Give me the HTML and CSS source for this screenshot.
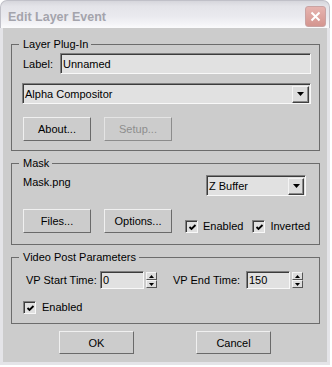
FILE: index.html
```html
<!DOCTYPE html>
<html lang="en">
<head>
  <meta charset="UTF-8" />
  <title>Edit Layer Event</title>
  <link rel="stylesheet" href="styles.css">
</head>
<body>

  <div class="window">
    <div class="titlebar">
      <span class="title">Edit Layer Event</span>
      <button class="close">
        <svg width="11" height="11" viewBox="0 0 11 11"><path d="M1.5 1.5 L9.5 9.5 M9.5 1.5 L1.5 9.5" stroke="#fff" stroke-width="2" fill="none"/></svg>
      </button>
    </div>

    <div class="client">

      <!-- Layer Plug-In -->
      <fieldset class="group plugin">
        <legend>Layer Plug-In</legend>
        <div class="row">
          <span class="label-name">Label:</span>
          <div class="field name-field">Unnamed</div>
        </div>
        <div class="combo plugin-combo">
          <span class="combo-text">Alpha Compositor</span>
          <span class="drop">
            <svg width="7" height="4" viewBox="0 0 7 4"><path d="M0 0 H7 L3.5 4 Z" fill="#000"/></svg>
          </span>
        </div>
        <div class="row btn-row">
          <button class="btn">About...</button>
          <button class="btn" disabled>Setup...</button>
        </div>
      </fieldset>

      <!-- Mask -->
      <fieldset class="group mask">
        <legend>Mask</legend>
        <div class="row mask-row">
          <span class="mask-file">Mask.png</span>
          <div class="combo zbuffer">
            <span class="combo-text">Z Buffer</span>
            <span class="drop">
              <svg width="7" height="4" viewBox="0 0 7 4"><path d="M0 0 H7 L3.5 4 Z" fill="#000"/></svg>
            </span>
          </div>
        </div>
        <div class="row btn-row bottom">
          <button class="btn">Files...</button>
          <button class="btn">Options...</button>
          <label class="check-item first">
            <span class="check"><svg width="9" height="9" viewBox="0 0 9 9"><path d="M1.5 4 L3.5 6 L7.5 2" stroke="#000" stroke-width="1.8" fill="none"/></svg></span>
            Enabled
          </label>
          <label class="check-item">
            <span class="check"><svg width="9" height="9" viewBox="0 0 9 9"><path d="M1.5 4 L3.5 6 L7.5 2" stroke="#000" stroke-width="1.8" fill="none"/></svg></span>
            Inverted
          </label>
        </div>
      </fieldset>

      <!-- Video Post Parameters -->
      <fieldset class="group vp">
        <legend>Video Post Parameters</legend>
        <div class="row time-row">
          <span class="time-label start">VP Start Time:</span>
          <div class="field time-field">0</div>
          <div class="spin">
            <span class="spin-btn"><svg width="5" height="3" viewBox="0 0 5 3"><path d="M0 3 H5 L2.5 0 Z" fill="#000"/></svg></span>
            <span class="spin-btn"><svg width="5" height="3" viewBox="0 0 5 3"><path d="M0 0 H5 L2.5 3 Z" fill="#000"/></svg></span>
          </div>
          <span class="time-label end">VP End Time:</span>
          <div class="field time-field">150</div>
          <div class="spin">
            <span class="spin-btn"><svg width="5" height="3" viewBox="0 0 5 3"><path d="M0 3 H5 L2.5 0 Z" fill="#000"/></svg></span>
            <span class="spin-btn"><svg width="5" height="3" viewBox="0 0 5 3"><path d="M0 0 H5 L2.5 3 Z" fill="#000"/></svg></span>
          </div>
        </div>
        <label class="check-item vp-enabled">
          <span class="check"><svg width="9" height="9" viewBox="0 0 9 9"><path d="M1.5 4 L3.5 6 L7.5 2" stroke="#000" stroke-width="1.8" fill="none"/></svg></span>
          Enabled
        </label>
      </fieldset>

      <div class="dialog-buttons">
        <button class="btn wide">OK</button>
        <button class="btn wide">Cancel</button>
      </div>

    </div>
  </div>

</body>
</html>
```

FILE: styles.css
```css
body {
  margin: 0;
  background: #fff;
  font-family: 'Liberation Sans', Arial, sans-serif;
  font-size: 11px;
  color: #000;
}

.window {
  width: 330px;
  height: 365px;
  display: flex;
  flex-direction: column;
}

.titlebar {
  height: 28px;
  box-sizing: border-box;
  display: flex;
  justify-content: space-between;
  align-items: center;
  padding: 0 3px 0 7px;
  background: linear-gradient(#d6d6dc 0%, #e4e4e9 20%, #e9e9ee 55%, #f4f4f7 85%, #fbfbfc 100%);
  border: 1px solid #c0c0c8;
  border-bottom: none;
  border-radius: 7px 7px 0 0;
}

.title {
  font-weight: bold;
  font-size: 12.5px;
  color: #a4a4ac;
  padding-top: 4px;
}

.close {
  width: 21px;
  height: 21px;
  margin-top: 3px;
  padding: 0;
  display: flex;
  align-items: center;
  justify-content: center;
  background: linear-gradient(#e6b4b0, #d4958f);
  border: 1px solid #c9a3a3;
  border-radius: 3px;
}

.client {
  flex: 1;
  display: flex;
  flex-direction: column;
  background: #cccccc;
  border: 3px solid #e4e4e8;
  border-top: none;
}

/* group boxes */

.group {
  margin: 0 7px 0 8px;
  border: 1px solid #6c6c6c;
  padding: 2px 8px 9px 11px;
  min-width: 0;
}

.group legend {
  padding: 0 3px 0 4px;
  margin-left: -4px;
  line-height: 13px;
}

.plugin {
  margin-top: 10px;
}

.mask {
  margin-top: 6px;
  padding-top: 5px;
  padding-bottom: 11px;
}

.vp {
  margin-top: 6px;
  padding-top: 7px;
  padding-bottom: 9px;
}

.row {
  display: flex;
  align-items: center;
}

/* sunken controls */

.field,
.combo,
.check {
  box-sizing: border-box;
  background: #e1e1e1;
  border: 1px solid;
  border-color: #808080 #f8f8f8 #f8f8f8 #808080;
  box-shadow: inset 1px 1px 0 #3c3c3c;
}

.field {
  height: 21px;
  line-height: 18px;
  padding: 1px 0 0 2px;
}

.label-name {
  width: 37px;
}

.name-field {
  flex: 1;
}

.combo {
  height: 21px;
  display: flex;
  align-items: center;
  justify-content: space-between;
  padding: 0 1px 0 2px;
}

.combo-text {
  padding-top: 1px;
}

.plugin-combo {
  margin: 9px 0 0 -1px;
}

.drop {
  width: 17px;
  height: 17px;
  box-sizing: border-box;
  display: flex;
  align-items: center;
  justify-content: center;
  background: #dddddd;
  border: 1px solid;
  border-color: #f4f4f4 #404040 #404040 #f4f4f4;
  box-shadow: inset -1px -1px 0 #8a8a8a;
  margin-top: 1px;
}

/* buttons */

.btn {
  width: 68px;
  height: 24px;
  padding: 0;
  font: inherit;
  color: #000;
  background: #cccccc;
  border: 1px solid;
  border-color: #f0f0f0 #6a6a6a #6a6a6a #f0f0f0;
}

.btn:disabled {
  color: #8e8e8e;
  border-color: #e4e4e4 #8c8c8c #8c8c8c #e4e4e4;
}

.btn-row {
  margin-top: 13px;
  gap: 13px;
}

.btn-row.bottom {
  align-items: flex-end;
}

/* mask */

.mask-row {
  justify-content: space-between;
  align-items: flex-start;
}

.mask-file {
  margin-top: 1px;
  line-height: 13px;
}

.zbuffer {
  width: 100px;
  margin-right: 5px;
}

.zbuffer .drop {
  width: 16px;
}

/* checkboxes */

.check-item {
  display: flex;
  align-items: center;
  gap: 5px;
  line-height: 13px;
}

.check-item.first {
  margin-right: -4px;
}

.check {
  width: 13px;
  height: 13px;
  display: flex;
  align-items: center;
  justify-content: center;
  padding: 1px 0 0 1px;
}

.check svg {
  display: block;
}

.vp-enabled {
  margin-top: 12px;
  gap: 6px;
}

/* video post */

.time-label.start {
  width: 77px;
  padding-left: 3px;
  box-sizing: border-box;
}

.time-label.end {
  width: 73px;
  margin-left: 16px;
}

.time-field {
  width: 44px;
  height: 18px;
  line-height: 15px;
}

.spin {
  width: 11px;
  height: 16px;
  margin-left: 2px;
  display: flex;
  flex-direction: column;
}

.spin-btn {
  flex: 1;
  display: flex;
  align-items: center;
  justify-content: center;
  background: #dddddd;
  border: 1px solid;
  border-color: #f4f4f4 #555555 #555555 #f4f4f4;
}

.spin-btn svg {
  display: block;
}

/* OK / Cancel */

.dialog-buttons {
  display: flex;
  justify-content: center;
  gap: 62px;
  margin-top: 7px;
}

.btn.wide {
  width: 75px;
  height: 23px;
}
```
